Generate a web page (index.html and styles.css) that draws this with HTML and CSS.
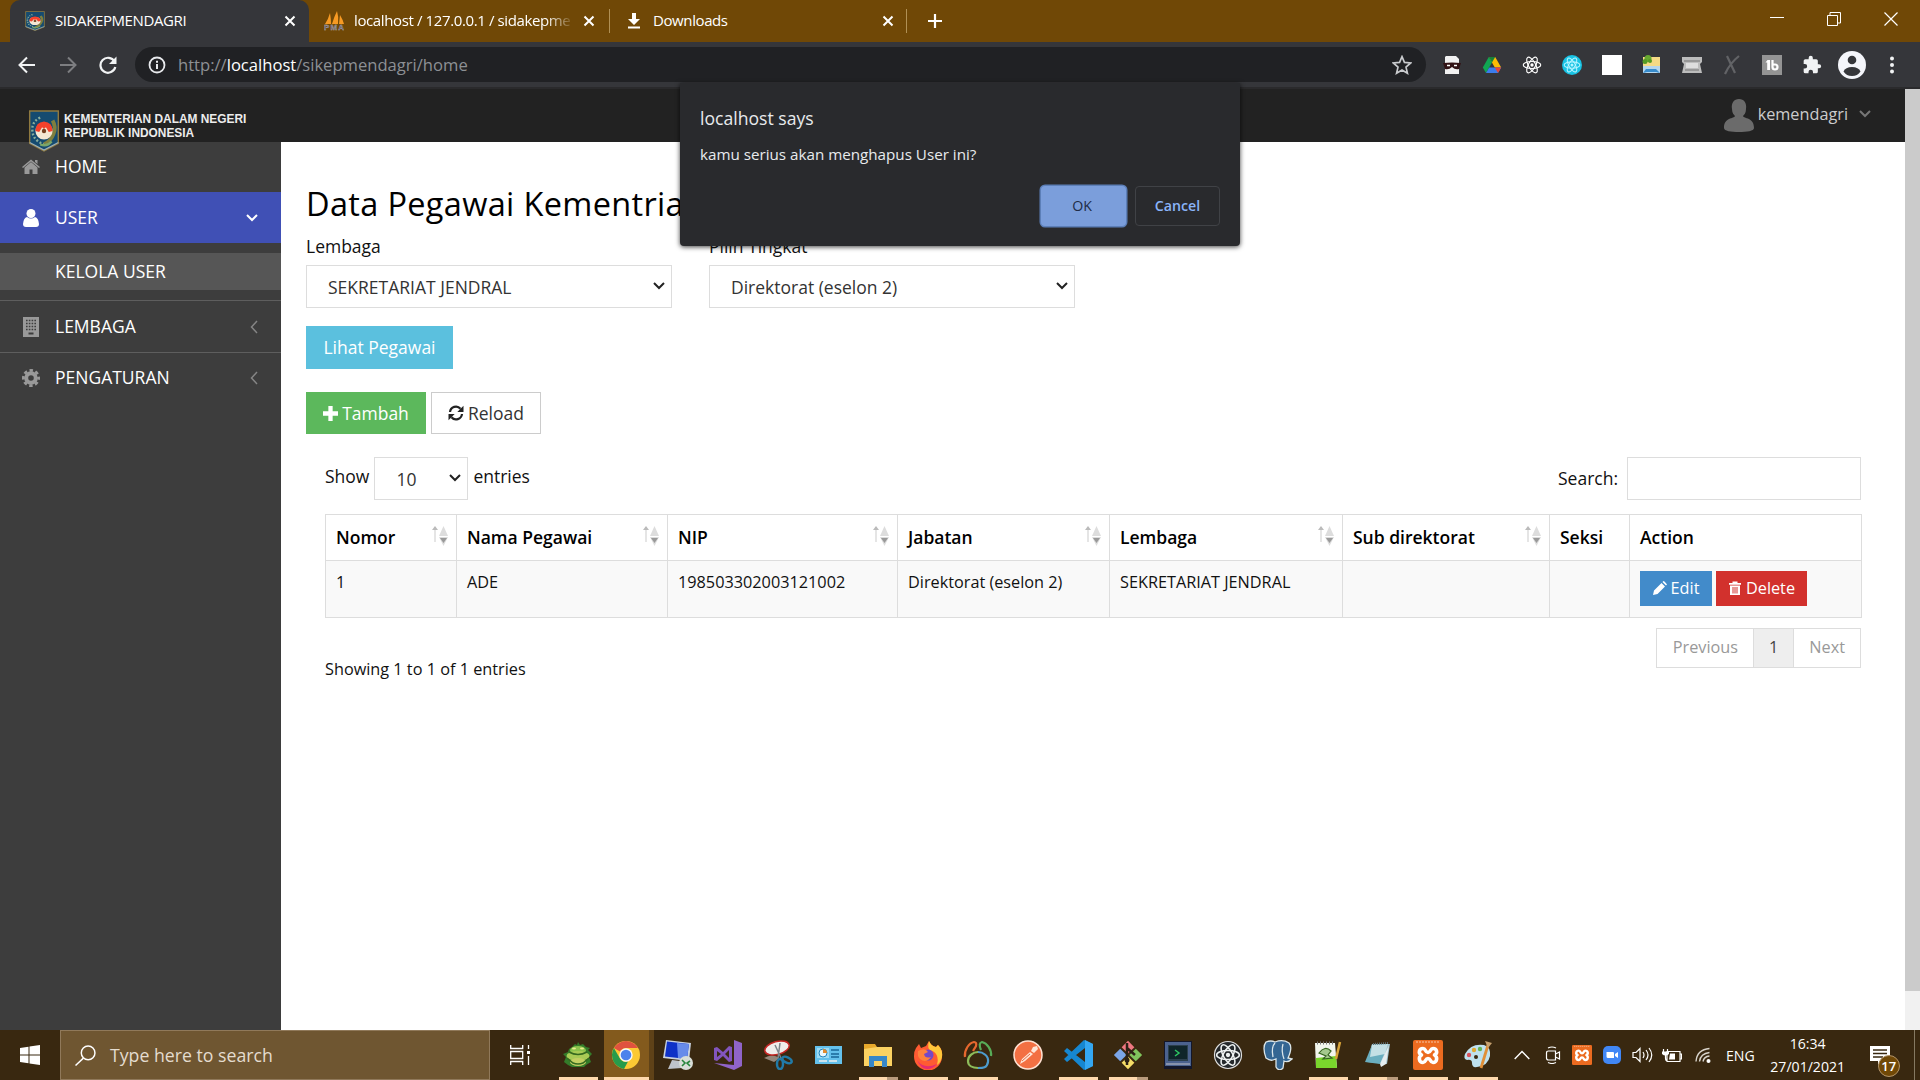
FILE: index.html
```html
<!DOCTYPE html>
<html lang="id">
<head>
<meta charset="utf-8">
<title>SIDAKEPMENDAGRI</title>
<link rel="stylesheet" href="styles.css">
</head>
<body>
<svg class="defs" width="0" height="0" aria-hidden="true">
  <symbol id="emblem" viewBox="0 0 32 44">
    <path d="M1 1h30v34l-15 8-15-8z" fill="#154b70" stroke="#8f793f" stroke-width="1.500"/>
    <path d="M1 34l15 8 15-8" fill="none" stroke="#9fb0b5" stroke-width="1.300"/>
    <path d="M12 8C5 11 3 17 4 23q1 9 12 13" fill="none" stroke="#88ad9b" stroke-width="2.500" stroke-dasharray="2 2"/>
    <path d="M25 11q4 7 1 14-3 8-10 11" fill="none" stroke="#7f7f3e" stroke-width="4"/>
    <path d="M12 36q7 3 12-3" fill="none" stroke="#79a66b" stroke-width="2.500"/>
    <circle cx="16" cy="22" r="9" fill="#f5e8d3"/>
    <path d="M7 22q0-9 9-10 9 1 9 10l-4 1-3-5-2 2-2-2-3 5z" fill="#f4412c"/>
    <circle cx="16" cy="22" r="2.300" fill="#754020"/>
  </symbol>
  <symbol id="x" viewBox="0 0 12 12"><path d="M1.500 1.500l9 9m0-9l-9 9" stroke="currentColor" stroke-width="2"/></symbol>
  <symbol id="chev-down" viewBox="0 0 12 8"><path d="M1 1l5 5 5-5" fill="none" stroke="currentColor" stroke-width="2"/></symbol>
  <symbol id="chev-left" viewBox="0 0 8 14"><path d="M7 1L1.500 7 7 13" fill="none" stroke="currentColor" stroke-width="1.500"/></symbol>
  <symbol id="atom" viewBox="0 0 24 24"><g fill="none" stroke="currentColor" stroke-width="1.400"><ellipse cx="12" cy="12" rx="10.500" ry="4.200"/><ellipse cx="12" cy="12" rx="10.500" ry="4.200" transform="rotate(60 12 12)"/><ellipse cx="12" cy="12" rx="10.500" ry="4.200" transform="rotate(120 12 12)"/></g><circle cx="12" cy="12" r="2" fill="currentColor"/></symbol>
  <symbol id="xampp" viewBox="0 0 30 30"><rect width="30" height="30" rx="2" fill="#ec6b20"/><path d="M3 2h24" stroke="#f8c7a6" stroke-width="1" stroke-dasharray="2 1"/><path d="M10 8.500c-4 0-5 5-1.500 6.500C5 17 6 22.500 10 22.500c3 0 2-4 5-4s2 4 5 4c4 0 5-5.500 1.500-7.500C25 13.500 24 8.500 20 8.500c-3 0-2 4-5 4s-2-4-5-4z" fill="none" stroke="#fff" stroke-width="3.600" stroke-linejoin="round"/></symbol>
  <symbol id="sort" viewBox="0 0 20 24"><path d="M5 3v15" stroke="#ddd" stroke-width="1.500"/><path d="M2 6l3-4 3 4z" fill="#bbb"/><path d="M9 12l4.500-10L18 12z" fill="#ddd"/><path d="M9 13h9l-4.500 9z" fill="#ddd"/><path d="M10 14h7l-3.500 5z" fill="#999"/></symbol>
</svg>

<div class="browser">
  <div class="tabstrip">
    <div class="tab tab-active">
      <svg class="fav" viewBox="0 0 32 44" preserveAspectRatio="none"><use href="#emblem" width="32" height="44"/></svg>
      <span class="tab-title t1">SIDAKEPMENDAGRI</span>
      <svg class="close"><use href="#x"/></svg>
    </div>
    <div class="tab tab-db">
      <svg class="fav pma" viewBox="0 0 20 20"><path d="M1 13Q4 9 6 2q1 6 1 11zM8 13q2-7 5-13 2 6 1 13zM15 13l1-9q3 5 4 9z" fill="#f79a23"/><text x="0" y="19" font-size="8" textLength="20" class="pma-text">PMA</text></svg>
      <span class="tab-title t2">localhost / 127.0.0.1 / sidakepme</span>
      <svg class="close"><use href="#x"/></svg>
    </div>
    <div class="tab tab-dl">
      <svg class="dl" viewBox="0 0 12 16"><path d="M4 0h4v6h4l-6 6-6-6h4zM0 13.500h12v2H0z" fill="#fff"/></svg>
      <span class="tab-title t3">Downloads</span>
      <svg class="close"><use href="#x"/></svg>
    </div>
    <svg class="plus" viewBox="0 0 16 16"><path d="M8 1v14M1 8h14" stroke="#fff" stroke-width="2.200"/></svg>
    <div class="winctl">
      <svg viewBox="0 0 14 14"><path d="M0 5.500h14" stroke="#fff"/></svg>
      <svg viewBox="0 0 14 14"><path d="M.5 3.500h10v10h-10zM3 3V.5h10.500V11H11" fill="none" stroke="#fff"/></svg>
      <svg viewBox="0 0 14 14"><path d="M.5 .5l13 13m0-13l-13 13" stroke="#fff" stroke-width="1.200"/></svg>
    </div>
  </div>
  <div class="toolbar">
    <svg class="nav n-back" viewBox="0 0 18 18"><path d="M17 9H2M9 1.500L1.500 9 9 16.500" fill="none" stroke="#f1f3f4" stroke-width="2"/></svg>
    <svg class="nav n-fwd" viewBox="0 0 18 18"><path d="M1 9h15M9 1.500L16.500 9 9 16.500" fill="none" stroke="#7d7e81" stroke-width="2"/></svg>
    <svg class="nav n-rel" viewBox="0 0 18 18"><path d="M15.500 5.500A7.500 7.500 0 1 0 16.300 11" fill="none" stroke="#f1f3f4" stroke-width="2.200"/><path d="M17.500 .5v7.500H10z" fill="#f1f3f4"/></svg>
    <div class="omnibox">
      <svg class="info" viewBox="0 0 18 18"><circle cx="9" cy="9" r="7.500" fill="none" stroke="#e8eaed" stroke-width="1.800"/><path d="M9 8v5M9 4.700v2" stroke="#e8eaed" stroke-width="2"/></svg>
      <span class="url">http://<b>localhost</b>/sikepmendagri/home</span>
      <svg class="star" viewBox="0 0 18 18"><path d="M9 1.500l2.200 5.200 5.600.5-4.200 3.700 1.300 5.500L9 13.500l-4.900 2.900 1.300-5.500L1.200 7.200l5.600-.5z" fill="none" stroke="#c9cbce" stroke-width="1.500"/></svg>
    </div>
    <div class="exts">
      <svg viewBox="0 0 20 20"><path d="M4 1h10l3 3v15H3V2z" fill="#f2f2f2"/><path d="M1 8q9-1 18 0l-2 6q-4 1-7-2-3 3-7 2z" fill="#321315"/><path d="M5 10.500h3m4 0h3" stroke="#fff" stroke-width="1.500"/></svg>
      <svg viewBox="0 0 20 20"><path d="M6.800 2h6.400l6 10.500h-6.400z" fill="#fbbc04"/><path d="M6.800 2L10 7.500 4 18 .8 12.500z" fill="#10a653"/><path d="M7.200 12.500h12L16 18H4z" fill="#3b7ded"/><path d="M6.800 2h6.400L10 7.500z" fill="#188038"/><path d="M16 18l-3.200-5.500h6.400z" fill="#ea4335"/></svg>
      <svg viewBox="0 0 20 20" color="#fff"><use href="#atom" width="20" height="20"/></svg>
      <svg viewBox="0 0 20 20" color="#b6f4ff"><circle cx="10" cy="10" r="10" fill="#18c3e4"/><use href="#atom" x="1" y="1" width="18" height="18"/></svg>
      <svg viewBox="0 0 20 20"><path d="M0 0h20v20H0z" fill="#fff"/></svg>
      <svg viewBox="0 0 20 20"><path d="M1 2h17v16H1z" fill="#f5da85"/><path d="M1 11h17v7H1z" fill="#b5d6ee"/><path d="M1 18l3-4h10l4 4-4-1H5z" fill="#388ccc"/><circle cx="6" cy="3.500" r="3.500" fill="#66a830"/><circle cx="3" cy="6.500" r="2.500" fill="#549b24"/><circle cx="8" cy="6" r="2" fill="#549b24"/></svg>
      <svg viewBox="0 0 20 20"><path d="M0 2h20v5l-2 2 2 9H0l2-9-2-2z" fill="#bcbcbc"/><path d="M2 6h16M4 10h12M3 15h14" stroke="#727272" stroke-width="1.200"/><path d="M4 8h12v5H4z" fill="#ddd"/></svg>
      <svg viewBox="0 0 20 20"><path d="M5 1l8 17M17 1q-9 7-14 18" stroke="#626366" stroke-width="2.200" fill="none"/></svg>
      <svg viewBox="0 0 20 20"><path d="M0 0h20v20H0z" fill="#949494"/><path d="M3.500 7.500h1.700V15H8V5H5.500z" fill="#fff"/><path d="M10.500 5v7a2.500 2.500 0 1 0 2.500-2.500h-2.500" fill="none" stroke="#fff" stroke-width="2.200"/></svg>
      <svg viewBox="0 0 24 24"><path d="M20.500 11H19V7a2 2 0 0 0-2-2h-4V3.500a2.500 2.500 0 0 0-5 0V5H4a2 2 0 0 0-2 2v3.800h1.500a2.700 2.700 0 0 1 0 5.400H2V20a2 2 0 0 0 2 2h3.800v-1.500a2.700 2.700 0 0 1 5.400 0V22H17a2 2 0 0 0 2-2v-4h1.500a2.500 2.500 0 0 0 0-5z" fill="#f1f3f4"/></svg>
      <svg class="profile" viewBox="0 0 28 28"><circle cx="14" cy="14" r="14" fill="#f4f5fa"/><circle cx="14" cy="9" r="4.300" fill="#35363a"/><path d="M5.500 20.500q2-4.500 8.500-4.500t8.500 4.500Q19.500 25 14 25t-8.500-4.500z" fill="#35363a"/></svg>
      <svg viewBox="0 0 20 20"><g fill="#f1f3f4"><circle cx="10" cy="3.500" r="2"/><circle cx="10" cy="10" r="2"/><circle cx="10" cy="16.500" r="2"/></g></svg>
    </div>
  </div>

  <div class="viewport">
    <div class="page">
      <header class="navbar">
        <div class="brand">
          <svg class="crest"><use href="#emblem"/></svg>
          <div class="brand-text"><span>KEMENTERIAN DALAM NEGERI</span><span>REPUBLIK INDONESIA</span></div>
        </div>
        <div class="account">
          <svg class="avatar" viewBox="0 0 30 33"><path d="M15 0c-5 0-8 4-7 10 0 4 2 6 3 7-1 3-11 1-11 12 0 3 7 4 15 4s15-1 15-4c0-11-10-9-11-12 1-1 3-3 3-7 1-6-2-10-7-10z" fill="#6b6b6b"/></svg>
          <span class="who">kemendagri</span>
          <svg class="caret"><use href="#chev-down"/></svg>
        </div>
      </header>
      <div class="body">
        <nav class="side">
          <a class="item home"><svg class="ico" viewBox="0 0 18 16"><path d="M9 3l6.500 5.500V15h-5v-4.500h-3V15h-5V8.500z" fill="#999"/><path d="M0 8l9-7.500L18 8l-1 1-8-6.500L1 9z" fill="#999"/><path d="M13 1h2.500v4L13 3z" fill="#999"/></svg><span>HOME</span></a>
          <a class="item user"><svg class="ico" viewBox="0 0 16 18"><circle cx="8" cy="4.500" r="4.500" fill="#fff"/><path d="M4 8q4 3 8 0 3.500 1 4 7 0 3-3 3H3q-3 0-3-3 .5-6 4-7z" fill="#fff"/></svg><span>USER</span><svg class="arr"><use href="#chev-down"/></svg></a>
          <a class="sub"><span>KELOLA USER</span></a>
          <a class="item lembaga"><svg class="ico bld" viewBox="0 0 16 20"><path d="M0 0h16v20H0z" fill="#999"/><path d="M3 3.500h10M3 6.500h10M3 9.500h10M3 12.500h10" stroke="#3d3d3d" stroke-width="1.500" stroke-dasharray="1.600 1.200"/><path d="M5.500 15.500h5v2h-5z" fill="#3d3d3d"/></svg><span>LEMBAGA</span><svg class="arr-l"><use href="#chev-left"/></svg></a>
          <a class="item peng"><svg class="ico gear" viewBox="0 0 18 18"><g fill="none" stroke="#999"><circle cx="9" cy="9" r="4.800" stroke-width="4"/><circle cx="9" cy="9" r="7.600" stroke-width="2.800" stroke-dasharray="3.400 2.570" stroke-dashoffset="1.700"/></g></svg><span>PENGATURAN</span><svg class="arr-l"><use href="#chev-left"/></svg></a>
        </nav>
        <main class="main">
          <h1>Data Pegawai Kementrian</h1>
          <div class="filters">
            <label><span>Lembaga</span><div class="select"><span>SEKRETARIAT JENDRAL</span><svg><use href="#chev-down"/></svg></div></label>
            <label><span>Pilih Tingkat</span><div class="select"><span>Direktorat (eselon 2)</span><svg><use href="#chev-down"/></svg></div></label>
          </div>
          <button class="btn info-btn"><span>Lihat Pegawai</span></button>
          <div class="actions">
            <button class="btn add"><svg viewBox="0 0 14 14"><path d="M5 0h4v5h5v4H9v5H5V9H0V5h5z" fill="#fff"/></svg><span>Tambah</span></button>
            <button class="btn reload"><svg viewBox="0 0 16 16"><path d="M2 7a6 6 0 0 1 10.500-3.300M14 9a6 6 0 0 1-10.500 3.300" fill="none" stroke="#222" stroke-width="2.200"/><path d="M15.500 .8V7H9.300zM.5 15.200V9h6.200z" fill="#222"/></svg><span>Reload</span></button>
          </div>
          <section class="grid">
            <div class="controls">
              <div class="show"><span>Show</span><div class="select small"><span>10</span><svg><use href="#chev-down"/></svg></div><span>entries</span></div>
              <div class="search"><span>Search:</span><div class="field"></div></div>
            </div>
            <table>
              <colgroup><col class="k1"><col class="k2"><col class="k3"><col class="k4"><col class="k5"><col class="k6"><col class="k7"><col class="k8"></colgroup>
              <thead><tr>
                <th><div><span>Nomor</span><svg><use href="#sort"/></svg></div></th>
                <th><div><span>Nama Pegawai</span><svg><use href="#sort"/></svg></div></th>
                <th><div><span>NIP</span><svg><use href="#sort"/></svg></div></th>
                <th><div><span>Jabatan</span><svg><use href="#sort"/></svg></div></th>
                <th><div><span>Lembaga</span><svg><use href="#sort"/></svg></div></th>
                <th><div><span>Sub direktorat</span><svg><use href="#sort"/></svg></div></th>
                <th><div><span>Seksi</span></div></th>
                <th><div><span>Action</span></div></th>
              </tr></thead>
              <tbody><tr>
                <td>1</td><td>ADE</td><td>198503302003121002</td><td>Direktorat (eselon 2)</td><td>SEKRETARIAT JENDRAL</td><td></td><td></td>
                <td class="ops"><div>
                  <button class="mini edit"><svg viewBox="0 0 14 14"><path d="M0 14l1-4.500L8.500 2l3.500 3.500L4.500 13zM9.500 1l1-1q1 0 3.500 3.500l-1 1z" fill="#fff"/></svg><span>Edit</span></button>
                  <button class="mini del"><svg viewBox="0 0 14 14"><path d="M1 2h3.500V.5h5V2H13v1.800H1zM2 4.500h10V14H2z" fill="#fff"/><path d="M5 6v6.500M7 6v6.500M9 6v6.500" stroke="#d2312d"/></svg><span>Delete</span></button>
                </div></td>
              </tr></tbody>
            </table>
            <div class="foot">
              <span class="count">Showing 1 to 1 of 1 entries</span>
              <div class="pager"><span>Previous</span><span class="cur">1</span><span>Next</span></div>
            </div>
          </section>
        </main>
      </div>
    </div>
    <div class="scroll"><div class="thumb"></div></div>
  </div>

  <div class="taskbar">
    <div class="start"><svg viewBox="0 0 20 20"><path d="M0 3l8.500-1.200v7.700H0zM9.500 1.600L20 0v9.500H9.500zM0 10.500h8.500v7.700L0 17zM9.500 10.500H20V20L9.500 18.400z" fill="#fff"/></svg></div>
    <div class="find"><svg viewBox="0 0 20 20"><circle cx="12.500" cy="7.500" r="6.500" fill="none" stroke="#fff" stroke-width="1.400"/><path d="M8 12.500L.5 19.500" stroke="#fff" stroke-width="1.400"/></svg><span>Type here to search</span></div>
    <div class="taskview"><svg viewBox="0 0 20 20"><g fill="none" stroke="#fff" stroke-width="1.300"><path d="M.7 0v3.500h12V0M.7 6.500h12v7h-12zM.7 20v-3.500h12V20M18.500 0v4M18.500 11v9"/></g><path d="M17 6h3v3h-3z" fill="#fff"/></svg></div>
    <div class="apps">
      <div class="app run"><svg viewBox="0 0 30 30"><path d="M9 7l3-3 2 1 1-3 2 3 3-1 3 3 4 1-2 2 4 4-3 3 2 5-5 3-2 2H9l-4-2-4-3 2-5-3-3 5-2 1-3z" fill="#347c2a"/><ellipse cx="15" cy="10.500" rx="8" ry="4.500" fill="#8cc34c"/><ellipse cx="15" cy="16" rx="11.500" ry="5" fill="#a9cb55"/><ellipse cx="15" cy="22" rx="8" ry="4" fill="#c4cf62"/><path d="M6 12q9 5 18 0M4 18l6 5q5 2 10 0l6-5" stroke="#35691f" stroke-width="1.500" fill="none"/><ellipse cx="11" cy="8.500" rx="2" ry="1" fill="#e7ed8c"/><ellipse cx="19" cy="8.500" rx="2" ry="1" fill="#e7ed8c"/></svg></div>
      <div class="app run chrome"><svg viewBox="0 0 30 30"><circle cx="15" cy="15" r="14" fill="#fcc934"/><path d="M2.900 8A14 14 0 0 1 27.100 8H15a7 7 0 0 0-6 3.500z" fill="#e0523f"/><path d="M2.900 8l6.100 10.500a7 7 0 0 0 8 3L13 28.900A14 14 0 0 1 2.900 8z" fill="#279b4b"/><circle cx="15" cy="15" r="6.700" fill="#f8f8f8"/><circle cx="15" cy="15" r="5.300" fill="#4c83ec"/></svg></div>
      <div class="app"><svg viewBox="0 0 30 30"><path d="M3 0l25 3-2 18L0 18z" fill="#c9d2e0"/><path d="M4 1.500l22 2.500-2 15L2 16.500z" fill="#0e31c7"/><path d="M14 3l12 1-2 15-9-1z" fill="#678bea"/><path d="M9 20l8 1 2 7-14 1z" fill="#bfc3cb"/><circle cx="23" cy="23" r="7" fill="#d9ded8"/><path d="M19 20l3 3-3 3m8-5l-3 2 3 3" stroke="#28863c" stroke-width="1.600" fill="none"/></svg></div>
      <div class="app"><svg viewBox="0 0 30 30"><path d="M21 0l8 3v23l-8 4-20-7 20 2z" fill="#9064c9"/><path d="M1 8l3-1 6 5 6-6 3 1v14l-3 1-6-6-6 5-3-1zM4 11v6l4-3zM16 10l-4 4 4 4z" fill="#8255bd" fill-rule="evenodd"/></svg></div>
      <div class="app"><svg viewBox="0 0 30 30"><path d="M1 18q8-5 16 0l-6 4z" fill="#94867a"/><ellipse cx="14" cy="8" rx="12.500" ry="6.500" transform="rotate(-15 14 8)" fill="#f0edeb" stroke="#c52725" stroke-width="1.500"/><path d="M12 5l6 13M17 3l-2 15" stroke="#7e858a" stroke-width="1.500"/><ellipse cx="17" cy="24" rx="3" ry="5" fill="none" stroke="#217aa7" stroke-width="2.500"/><ellipse cx="24" cy="20" rx="5" ry="2.700" fill="none" stroke="#217aa7" stroke-width="2.500" transform="rotate(25 24 20)"/></svg></div>
      <div class="app"><svg viewBox="0 0 30 30"><path d="M2 6h27v18H2z" fill="#64c1ec"/><path d="M4 8h12v10H4z" fill="#9ddbf5"/><circle cx="10" cy="13" r="4" fill="#e9f7fd" stroke="#2285bd"/><path d="M10 13V9a4 4 0 0 1 4 4z" fill="#e08b2e"/><path d="M18 10h8M18 14h8M18 17h8" stroke="#196798" stroke-width="1.500"/><path d="M6 21h18" stroke="#efefef" stroke-width="1.500" stroke-dasharray="8 2"/></svg></div>
      <div class="app run split"><svg viewBox="0 0 30 30"><path d="M1 4h11l2 3h15v19H1z" fill="#e8a92c"/><path d="M1 9l13-2h15v19H1z" fill="#fbd262"/><path d="M6 27V16h18v11h-5v-6h-8v6z" fill="#3787c8"/></svg></div>
      <div class="app run"><svg viewBox="0 0 30 30"><path d="M3 8l3-4 2 4 5-2 3-5q2 5 7 6l2-2q5 5 4 12A14 14 0 0 1 1 16q0-5 2-8z" fill="#ff5b32"/><path d="M16 1q2 5 7 6l2-2q5 5 4 12-1 5-5 8 3-12-7-15-3-2-1-9z" fill="#ffc73a"/><path d="M4 20q7 10 20 4-4 5-10 5T4 20z" fill="#e72b71"/><circle cx="15" cy="15" r="5.500" fill="#7549c7"/><path d="M5 11q7-4 10 1l-4 2q1 5 7 3-5 7-11 2-3-3-2-8z" fill="#ff823b"/></svg></div>
      <div class="app run"><svg viewBox="0 0 30 30"><g fill="none" stroke-width="2.200"><path d="M15 12c-5 0-10 4-10 9s5 7 10 7" stroke="#8dbc5a"/><path d="M15 12c5 0 11 4 10 10s-5 6-10 6" stroke="#4d9ccd"/><path d="M2 17C1 10 6 3 11 2q3 0 2 4l-3 5" stroke="#e6682e"/><path d="M28 16C29 10 24 3 19 2q-4 1-1 8" stroke="#58ac57"/></g></svg></div>
      <div class="app"><svg viewBox="0 0 30 30"><circle cx="15" cy="15" r="14" fill="#f37043" stroke="#ffe1d2" stroke-width="1.500"/><path d="M7 24l2-5 8-7 3 2-8 7zM18 11l2-4 4-1 1 3-4 4z" fill="#ffe5d7"/><path d="M9 21l8-7" stroke="#e16d45"/></svg></div>
      <div class="app run"><svg viewBox="0 0 30 30"><path d="M21 0l9 4v22l-9 4L1 11l3-3 18 14V8L4 22l-3-3z" fill="#1687d1"/><path d="M22 0l8 4v22l-8 4z" fill="#34a7f2"/></svg></div>
      <div class="app run split"><svg viewBox="0 0 30 30"><g transform="rotate(45 15 15)"><path d="M5 5h9v9H5z" fill="#ef7780"/><path d="M16 5h9v9h-9z" fill="#80c45d"/><path d="M5 16h9v9H5z" fill="#7ba5e8"/><path d="M16 16h9v9h-9z" fill="#f6dd68"/></g><path d="M14 3v22M14 8l8 7" stroke="#2b2015" stroke-width="2.500"/><circle cx="14" cy="20" r="2.500" fill="#2b2015"/></svg></div>
      <div class="app"><svg viewBox="0 0 30 30"><path d="M1 1h28v28H1z" fill="#13172b"/><path d="M2 2h26v24H2z" fill="#4b628e"/><path d="M5 5h20v16H5z" fill="#2b3f4d"/><path d="M6 6h18v13H6z" fill="#0f252a"/><path d="M12 10l4 3-4 3" stroke="#2dc762" stroke-width="1.500" fill="none"/><path d="M3 24h24" stroke="#8792ac" stroke-width="2"/></svg></div>
      <div class="app"><svg viewBox="0 0 30 30" color="#eef2f1"><circle cx="15" cy="15" r="13.500" fill="#24282b" stroke="#ddd" stroke-width="1.200"/><use href="#atom" x="2" y="2" width="26" height="26"/></svg></div>
      <div class="app"><svg viewBox="0 0 30 30"><path d="M3 18Q-1 7 3 2q5-2 9 0 8-3 14 1 4 4-1 15l4 1q-4 4-8 2l-1 7q-4 4-7-1v-8l-3 1q-3 1-7-2z" fill="#346693" stroke="#dae5e9" stroke-width="1.300"/><path d="M12 3Q8 7 10 17M20 4q-2 7 1 15" stroke="#dae5e9" stroke-width="1.300" fill="none"/></svg></div>
      <div class="app run"><svg viewBox="0 0 30 30"><path d="M2 3h20l2 25H3z" fill="#f2f6ed"/><path d="M3 18l20-2 1 12H3z" fill="#7ad52c"/><path d="M6 13q6-8 12-2l-3 4 4 3-9 1 3-3z" fill="#a4c98d" stroke="#36651f" stroke-width="1.200"/><path d="M27 2l-4 17" stroke="#d6a237" stroke-width="2.500"/><path d="M4 3h18" stroke="#777" stroke-dasharray="1 2" stroke-width="3"/></svg></div>
      <div class="app run split"><svg viewBox="0 0 30 30"><path d="M9 4h18l-3 20-20-2z" fill="#9fc1cb"/><path d="M9 5l16-1-8 20L2 22z" fill="#6aaebf"/><path d="M9 5l16-1-3 10-15 3z" fill="#c4e0e5"/><path d="M10 4l15-1" stroke="#5d6e73" stroke-dasharray="1 1" stroke-width="2"/><path d="M17 24l9-19-3 19-5 3z" fill="#e5edef"/></svg></div>
      <div class="app run"><svg><use href="#xampp"/></svg></div>
      <div class="app run"><svg viewBox="0 0 30 30"><path d="M2 14Q8 3 21 5q7 2 6 11-2 10-13 11-5 1-5-4 0-4-5-3-4-1-2-6z" fill="#bfe1ef"/><circle cx="6" cy="15" r="2.200" fill="#d8525c"/><circle cx="11" cy="10" r="2.200" fill="#e2aa35"/><circle cx="17" cy="9" r="2.200" fill="#67b353"/><circle cx="13" cy="17" r="2" fill="#3a2a13"/><path d="M18 28l7-23" stroke="#e08f38" stroke-width="2.800"/><path d="M22 1l7 2-4 5z" fill="#c6a170"/></svg></div>
    </div>
    <div class="tray">
      <svg class="y1" viewBox="0 0 16 10"><path d="M.7 9L8 1.500 15.300 9" fill="none" stroke="#fff" stroke-width="1.400"/></svg>
      <svg class="y2" viewBox="0 0 16 18"><path d="M3.500 5h7v9h-7q-2 0-2-2V7q0-2 2-2zM10.500 8l4-2v7l-4-2M3 2q4-2 8 0M3 16.500q4 2 8 0" fill="none" stroke="#fff" stroke-width="1.200"/></svg>
      <svg class="y3"><use href="#xampp"/></svg>
      <svg class="y4" viewBox="0 0 18 18"><rect width="18" height="18" rx="5" fill="#4187f5"/><path d="M3.500 6h6.500q1 0 1 1v5H5q-1.500 0-1.500-1.500zM12 8l3-2v6l-3-2z" fill="#fff"/></svg>
      <svg class="y5" viewBox="0 0 21 18"><path d="M1 6.500h3l4-4v13l-4-4H1zM11 6q2 3 0 6M14 4q4 5 0 10M17 2q5.500 7 0 14" fill="none" stroke="#fff" stroke-width="1.200"/></svg>
      <svg class="y6" viewBox="0 0 20 15"><path d="M5 3.500h13v10H5zM18.500 6h1v5h-1M3.500 7v3q0 3 2 3M1.500 1v3M5.500 1v3" fill="none" stroke="#fff" stroke-width="1.200"/><path d="M0 3.500h7V6q-3.500 3-7 0zM8 5.500h5v6H7z" fill="#fff"/></svg>
      <svg class="y7" viewBox="0 0 16 16"><path d="M1 14.500Q2 2.500 14.500 1.500M4.500 14.500q1-8 10-9M8 14.500q1-5 6.500-5.500" fill="none" stroke="#d9d4cc" stroke-width="1.400"/><circle cx="13.500" cy="14" r="2" fill="#fff"/></svg>
      <span class="lang">ENG</span>
      <div class="clock"><span>16:34</span><span>27/01/2021</span></div>
      <div class="notif"><svg viewBox="0 0 20 19"><path d="M0 0h20v15h-8l-4 4v-4H0z" fill="#fff"/><path d="M3 4h14M3 7.500h14M3 11h10" stroke="#392810" stroke-width="1.300"/></svg><span class="badge">17</span></div>
      <div class="peek"></div>
    </div>
  </div>

  <div class="dialog">
    <span class="d-title">localhost says</span>
    <span class="d-msg">kamu serius akan menghapus User ini?</span>
    <div class="d-btns"><button class="ok">OK</button><button class="cancel">Cancel</button></div>
  </div>
</div>
</body>
</html>
```
FILE: styles.css
```css
* { box-sizing: border-box; }
body { margin: 0; background: #fff; font-family: "Open Sans", "Noto Sans", sans-serif; color: #111; }
.defs { position: absolute; }
svg { display: block; flex: none; }
button { font-family: inherit; border: 0; margin: 0; padding: 0; border-radius: 0; }
.browser { position: relative; width: 1920px; height: 1080px; overflow: hidden; display: flex; flex-direction: column; }

/* browser chrome */
.tabstrip { height: 42px; background: #704806; display: flex; align-items: center; padding-left: 10px; color: #fff; font-size: 15px; }
.tab { display: flex; align-items: center; height: 42px; white-space: nowrap; }
.tab-title { flex: 1; padding-bottom: 2px; }
.tab-active { width: 299px; background: #35363a; border-radius: 10px 10px 0 0; padding: 0 13px 0 15px; }
.tab-db { width: 300px; padding: 0 14px 0 15px; }
.tab-dl { width: 298px; height: 24px; padding: 0 12px 0 18px; border: solid #b09055; border-width: 0 1px; }
.fav { width: 20px; height: 20px; margin-right: 10px; }
.pma-text { font-family: "Liberation Sans", sans-serif; font-weight: bold; fill: #55516e; stroke: #c9c2c0; stroke-width: .3px; }
.t1 { letter-spacing: -.4px; }
.t2 { letter-spacing: -.38px; margin-right: 4px; -webkit-mask-image: linear-gradient(90deg, #000 85%, transparent 98%); }
.t3 { letter-spacing: -.4px; }
.close { width: 12px; height: 12px; }
.dl { width: 12px; height: 16px; margin-right: 13px; }
.plus { width: 16px; height: 16px; margin-left: 20px; }
.winctl { margin-left: auto; display: flex; gap: 43px; padding: 0 22px 5px 0; }
.winctl svg { width: 14px; height: 14px; }
.toolbar { height: 47px; background: #35363a; display: flex; align-items: flex-start; padding: 5px 18px 0 18px; border-bottom: 2px solid #2a2a2c; }
.nav { width: 18px; height: 18px; margin-top: 9px; }
.n-fwd { margin-left: 23px; }
.n-rel { margin-left: 22px; }
.omnibox { margin-left: 18px; width: 1291px; height: 35px; border-radius: 18px; background: #202124; display: flex; align-items: center; padding: 0 14px 0 13px; }
.info { width: 18px; height: 18px; margin-right: 12px; }
.url { font-size: 16.6px; color: #8d9094; flex: 1; }
.url b { font-weight: 400; color: #fff; }
.star { width: 20px; height: 20px; }
.exts { display: flex; align-items: center; gap: 20px; height: 35px; margin-left: 16px; }
.exts svg { width: 20px; height: 20px; }
.exts svg.profile { width: 28px; height: 28px; margin: 0 -4px; }

/* web page */
.viewport { height: 941px; display: flex; }
.page { width: 1905px; }
.navbar { height: 53px; background: #222; display: flex; justify-content: space-between; }
.brand { display: flex; padding: 21px 0 0 28px; gap: 4px; position: relative; z-index: 2; height: 64px; }
.crest { width: 32px; height: 42px; }
.brand-text { font: bold 11.9px/14px "Liberation Sans", Arial, sans-serif; color: #ececec; display: flex; flex-direction: column; align-items: flex-start; padding-top: 2px; white-space: nowrap; }
.account { display: flex; align-items: center; padding-right: 34px; font-size: 16.25px; color: #ccc; }
.avatar { width: 30px; height: 33px; margin-right: 4px; }
.who { padding-bottom: 3px; }
.caret { width: 12px; height: 8px; margin-left: 11px; margin-bottom: 3px; color: #777; }
.body { display: flex; height: 888px; }
.side { flex: none; width: 281px; background: #3d3d3d; color: #fff; font-size: 17.5px; }
.item { display: flex; align-items: center; padding: 0 23px 0 22px; }
.side span { padding-bottom: 2px; }
.ico { width: 18px; height: 18px; margin-right: 15px; }
.home { height: 50px; }
.user { height: 51px; background: #4050b5; }
.arr { margin-left: auto; width: 12px; height: 8px; }
.arr-l { margin-left: auto; width: 8px; height: 14px; color: #858585; }
.sub { display: flex; align-items: center; height: 37px; margin: 10px 0; padding-left: 55px; background: #565656; }
.lembaga { height: 52px; border-top: 1px solid #5e5e5e; }
.peng { height: 51px; border-top: 1px solid #5e5e5e; }
.bld { height: 20px; padding: 0 1px; }
.main { flex: 1; min-width: 0; padding: 38px 44px 0 25px; }
h1 { margin: 0; font-size: 32.5px; line-height: 48px; font-weight: 400; letter-spacing: .33px; color: #000; }
.filters { display: flex; gap: 37px; margin-top: 6px; font-size: 17.5px; }
.filters label { width: 366px; line-height: 24px; }
.select { height: 43px; border: 1px solid #ddd; display: flex; align-items: center; justify-content: space-between; padding: 0 6px 0 21px; color: #333; margin-top: 7px; background: #fff; }
.select svg { width: 12px; height: 8px; color: #222; margin-top: -2px; }
.btn { height: 43px; font-size: 17.5px; display: flex; align-items: center; justify-content: center; color: #fff; }
.info-btn { width: 147px; background: #5bc0de; margin-top: 18px; padding-bottom: 2px; }
.actions { display: flex; gap: 5px; margin-top: 23px; }
.actions .btn { height: 42px; gap: 4px; }
.add { width: 120px; background: #5cb85c; }
.add svg { width: 15px; height: 15px; }
.reload { width: 110px; background: #fff; border: 1px solid #ccc; color: #333; }
.reload svg { width: 16px; height: 16px; }
.grid { margin: 23px 0 0 19px; }
.controls { display: flex; justify-content: space-between; height: 43px; font-size: 17.5px; }
.show { display: flex; line-height: 39px; }
.small { width: 94px; margin: 0 5px; line-height: 24px; }
.search { display: flex; line-height: 43px; gap: 9px; }
.field { width: 234px; height: 43px; border: 1px solid #ddd; }
table { border-collapse: collapse; table-layout: fixed; width: 1536px; margin-top: 14px; }
th, td { border: 1px solid #ddd; padding: 0 10px; text-align: left; }
th { height: 46px; font-size: 17.5px; font-weight: 600; color: #000; }
th div { display: flex; align-items: center; justify-content: space-between; margin-right: -4px; white-space: nowrap; }
th span { padding-bottom: 2px; }
th svg { width: 20px; height: 24px; margin-top: -3px; }
td { height: 57px; background: #f9f9f9; font-size: 16.25px; vertical-align: top; padding-top: 9px; line-height: 24px; }
.k1 { width: 131px; } .k2 { width: 211px; } .k3 { width: 230px; } .k4 { width: 212px; }
.k5 { width: 233px; } .k6 { width: 207px; } .k7 { width: 80px; } .k8 { width: 232px; }
.ops { padding-top: 10px; }
.ops div { display: flex; gap: 4px; }
.mini { height: 35px; color: #fff; font-size: 16.25px; display: flex; align-items: center; justify-content: center; gap: 4px; padding-bottom: 1px; }
.mini svg { width: 14px; height: 14px; }
.edit { width: 72px; background: #428bca; }
.del { width: 91px; background: #d2312d; }
.foot { display: flex; justify-content: space-between; margin-top: 10px; font-size: 16.25px; }
.count { padding-top: 29px; line-height: 24px; }
.pager { display: flex; height: 40px; border: 1px solid #ddd; color: #999; }
.pager span { display: flex; align-items: center; padding: 0 15px 2px; border-left: 1px solid #ddd; height: 38px; }
.pager span:first-child { border-left: 0; padding-left: 16px; }
.pager .cur { background: #eee; color: #444; }
.scroll { width: 15px; background: #f1f1f1; }
.thumb { height: 902px; background: #cbcbcb; }

/* taskbar */
.taskbar { height: 50px; background: #392810; display: flex; color: #fff; }
.start { width: 60px; display: flex; align-items: center; justify-content: center; }
.start svg { width: 20px; height: 20px; }
.find { width: 430px; background: #6f5631; border: 1px solid #90795a; display: flex; align-items: center; padding-left: 14px; gap: 14px; font-size: 17.7px; color: #e4dccf; }
.find svg { width: 21px; height: 21px; }
.find span { padding-bottom: 1px; }
.taskview { width: 64px; display: flex; align-items: center; justify-content: center; }
.taskview svg { width: 20px; height: 20px; margin-left: -4px; }
.apps { display: flex; }
.app { width: 50px; height: 50px; display: flex; align-items: center; justify-content: center; background: no-repeat 5px 47px / 39px 3px; padding-right: 2px; }
.app svg { width: 30px; height: 30px; }
.run { background-image: linear-gradient(#ffd9ad, #ffd9ad); }
.split { background-image: linear-gradient(90deg, #ffd9ad 28px, #b99b7c 28px); }
.chrome { background-color: #835a1d; background-size: 50px 3px; background-position: 0 47px; border-right: 5px solid #5f4218; padding: 0 1px 0 0; }
.tray { flex: 1; display: flex; align-items: center; font-size: 14.1px; }
.y1 { width: 16px; height: 10px; margin-left: 10px; }
.y2 { width: 16px; height: 18px; margin-left: 15px; }
.y3 { width: 20px; height: 20px; margin-left: 11px; }
.y4 { width: 18px; height: 18px; margin-left: 11px; }
.y5 { width: 21px; height: 18px; margin-left: 11px; }
.y6 { width: 20px; height: 15px; margin-left: 9px; }
.y7 { width: 16px; height: 16px; margin-left: 13px; }
.lang { margin-left: 15px; }
.clock { width: 76px; margin-left: 15px; display: flex; flex-direction: column; align-items: center; line-height: 23px; }
.notif { position: relative; margin-left: 24px; }
.notif svg { width: 20px; height: 19px; }
.badge { position: absolute; left: 8px; top: 9px; width: 22px; height: 22px; border-radius: 50%; background: #704806; border: 1px solid #b39468; text-align: center; line-height: 20px; font-size: 13px; font-weight: 600; }
.peek { margin-left: auto; width: 6px; height: 50px; border-left: 1px solid #857962; }

/* modal dialog */
.dialog { position: absolute; left: 680px; top: 83px; width: 560px; height: 163px; background: #292a2d; border-radius: 0 0 4px 4px; box-shadow: 0 1px 5px rgba(0,0,0,.75); color: #e8eaed; padding: 21px 20px 20px; display: flex; flex-direction: column; }
.d-title { font-size: 17.6px; line-height: 28px; }
.d-msg { font-size: 15.2px; line-height: 24px; margin-top: 10px; }
.d-btns { margin-top: auto; display: flex; justify-content: flex-end; gap: 9px; }
.d-btns button { width: 85px; height: 40px; border-radius: 4px; font-size: 14.2px; font-weight: 600; padding-bottom: 2px; }
.d-btns .ok { background: #7b9edb; color: #202c47; box-shadow: 0 0 0 1.500px #5c7fb8; padding-right: 3px; font-weight: 500; }
.cancel { background: #292a2d; color: #8ab4f8; border: 1px solid #404246; }
```
